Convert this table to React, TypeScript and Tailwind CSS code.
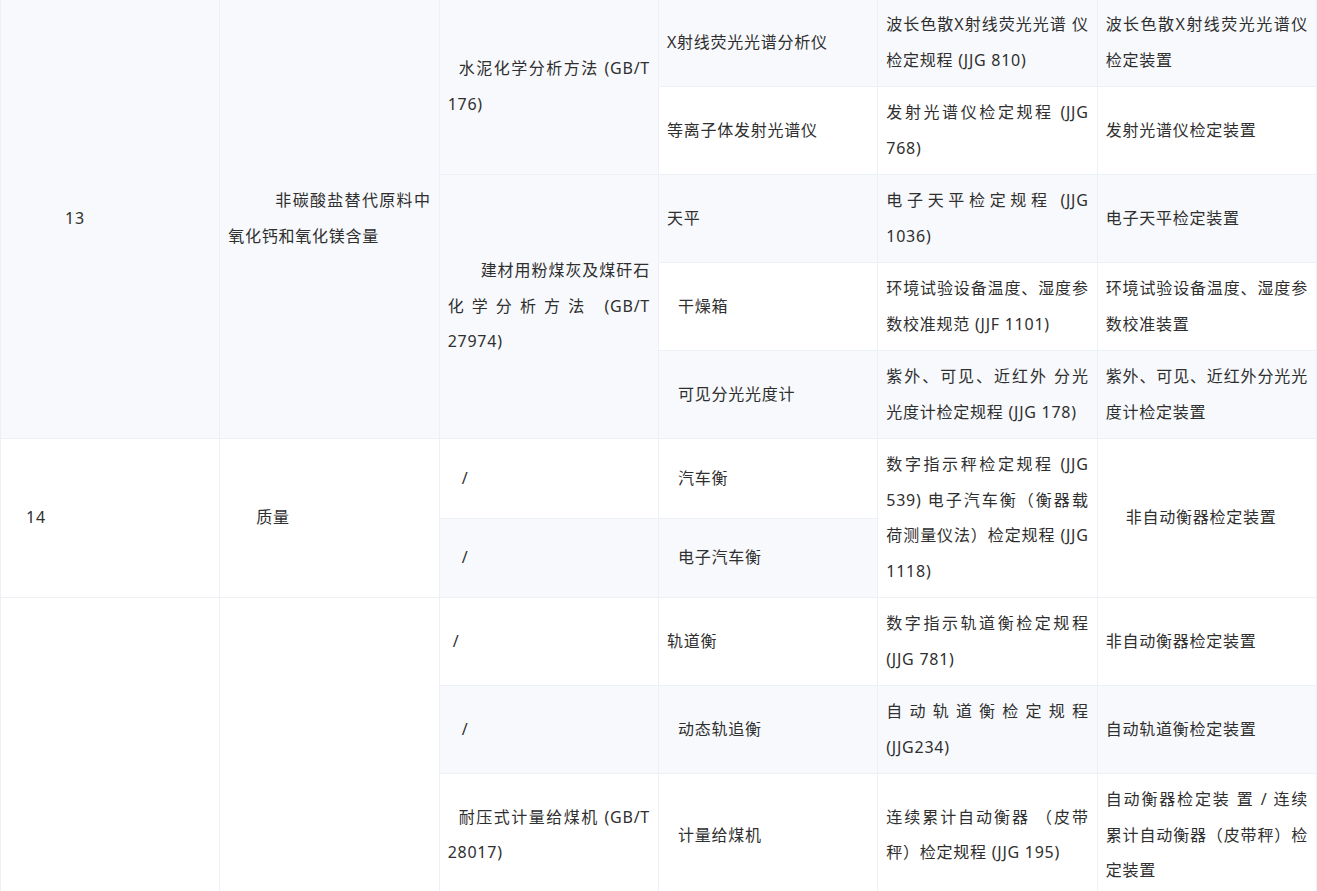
type Cell = {
  t: string;
  rs?: number;
  ind?: string;
};

// each row lists only the cells that start in it (rowSpan cells skip later rows)
const rows: Cell[][] = [
  [
    { t: "13", rs: 5, ind: "indent-[56px]" },
    { t: "非碳酸盐替代原料中氧化钙和氧化镁含量", rs: 5, ind: "indent-[47px]" },
    { t: "水泥化学分析方法 (GB/T 176)", rs: 2, ind: "indent-[11px]" },
    { t: "X射线荧光光谱分析仪" },
    { t: "波长色散X射线荧光光谱 仪检定规程 (JJG 810)" },
    { t: "波长色散X射线荧光光谱仪检定装置" },
  ],
  [
    { t: "等离子体发射光谱仪" },
    { t: "发射光谱仪检定规程 (JJG 768)" },
    { t: "发射光谱仪检定装置" },
  ],
  [
    { t: "建材用粉煤灰及煤矸石化学分析方法 (GB/T 27974)", rs: 3, ind: "indent-[33px]" },
    { t: "天平" },
    { t: "电子天平检定规程 (JJG 1036)" },
    { t: "电子天平检定装置" },
  ],
  [
    { t: "干燥箱", ind: "indent-[11px]" },
    { t: "环境试验设备温度、湿度参数校准规范 (JJF 1101)" },
    { t: "环境试验设备温度、湿度参数校准装置" },
  ],
  [
    { t: "可见分光光度计", ind: "indent-[11px]" },
    { t: "紫外、可见、近红外 分光光度计检定规程 (JJG 178)" },
    { t: "紫外、可见、近红外分光光度计检定装置" },
  ],
  [
    { t: "14", rs: 2, ind: "indent-[17px]" },
    { t: "质量", rs: 2, ind: "indent-[28px]" },
    { t: "/", ind: "indent-[14px]" },
    { t: "汽车衡", ind: "indent-[11px]" },
    { t: "数字指示秤检定规程 (JJG 539) 电子汽车衡（衡器载荷测量仪法）检定规程 (JJG 1118)", rs: 2 },
    { t: "非自动衡器检定装置", rs: 2, ind: "indent-[20px]" },
  ],
  [
    { t: "/", ind: "indent-[14px]" },
    { t: "电子汽车衡", ind: "indent-[11px]" },
  ],
  [
    { t: "", rs: 3 },
    { t: "", rs: 3 },
    { t: "/", ind: "indent-[5px]" },
    { t: "轨道衡" },
    { t: "数字指示轨道衡检定规程 (JJG 781)" },
    { t: "非自动衡器检定装置" },
  ],
  [
    { t: "/", ind: "indent-[14px]" },
    { t: "动态轨追衡", ind: "indent-[11px]" },
    { t: "自动轨道衡检定规程 (JJG234)" },
    { t: "自动轨道衡检定装置" },
  ],
  [
    { t: "耐压式计量给煤机 (GB/T 28017)", ind: "indent-[11px]" },
    { t: "计量给煤机", ind: "indent-[11px]" },
    { t: "连续累计自动衡器 （皮带秤）检定规程 (JJG 195)" },
    { t: "自动衡器检定装 置 / 连续累计自动衡器（皮带秤）检定装置" },
  ],
];

export default function App() {
  return (
    <div className="w-[1317px] h-[891px] overflow-hidden bg-white">
      <table className="-mt-[2px] w-full table-fixed border-collapse font-['Noto_Sans','Noto_Sans_CJK_SC',sans-serif] text-[16px] leading-[35.5px] tracking-[0.75px] text-[#2f2f2f]">
        <colgroup>
          <col className="w-1/6" />
          <col className="w-1/6" />
          <col className="w-1/6" />
          <col className="w-1/6" />
          <col className="w-1/6" />
          <col className="w-1/6" />
        </colgroup>
        <tbody>
          {rows.map((cells, i) => (
            <tr key={i} className={i % 2 === 0 ? "bg-[#f7f9fc]" : "bg-white"}>
              {cells.map((c, j) => (
                <td
                  key={j}
                  rowSpan={c.rs}
                  className={`border border-[#edf0f5] px-[8px] py-[8px] align-middle text-justify ${c.ind ?? ""}`}
                >
                  {c.t}
                </td>
              ))}
            </tr>
          ))}
        </tbody>
      </table>
    </div>
  );
}
